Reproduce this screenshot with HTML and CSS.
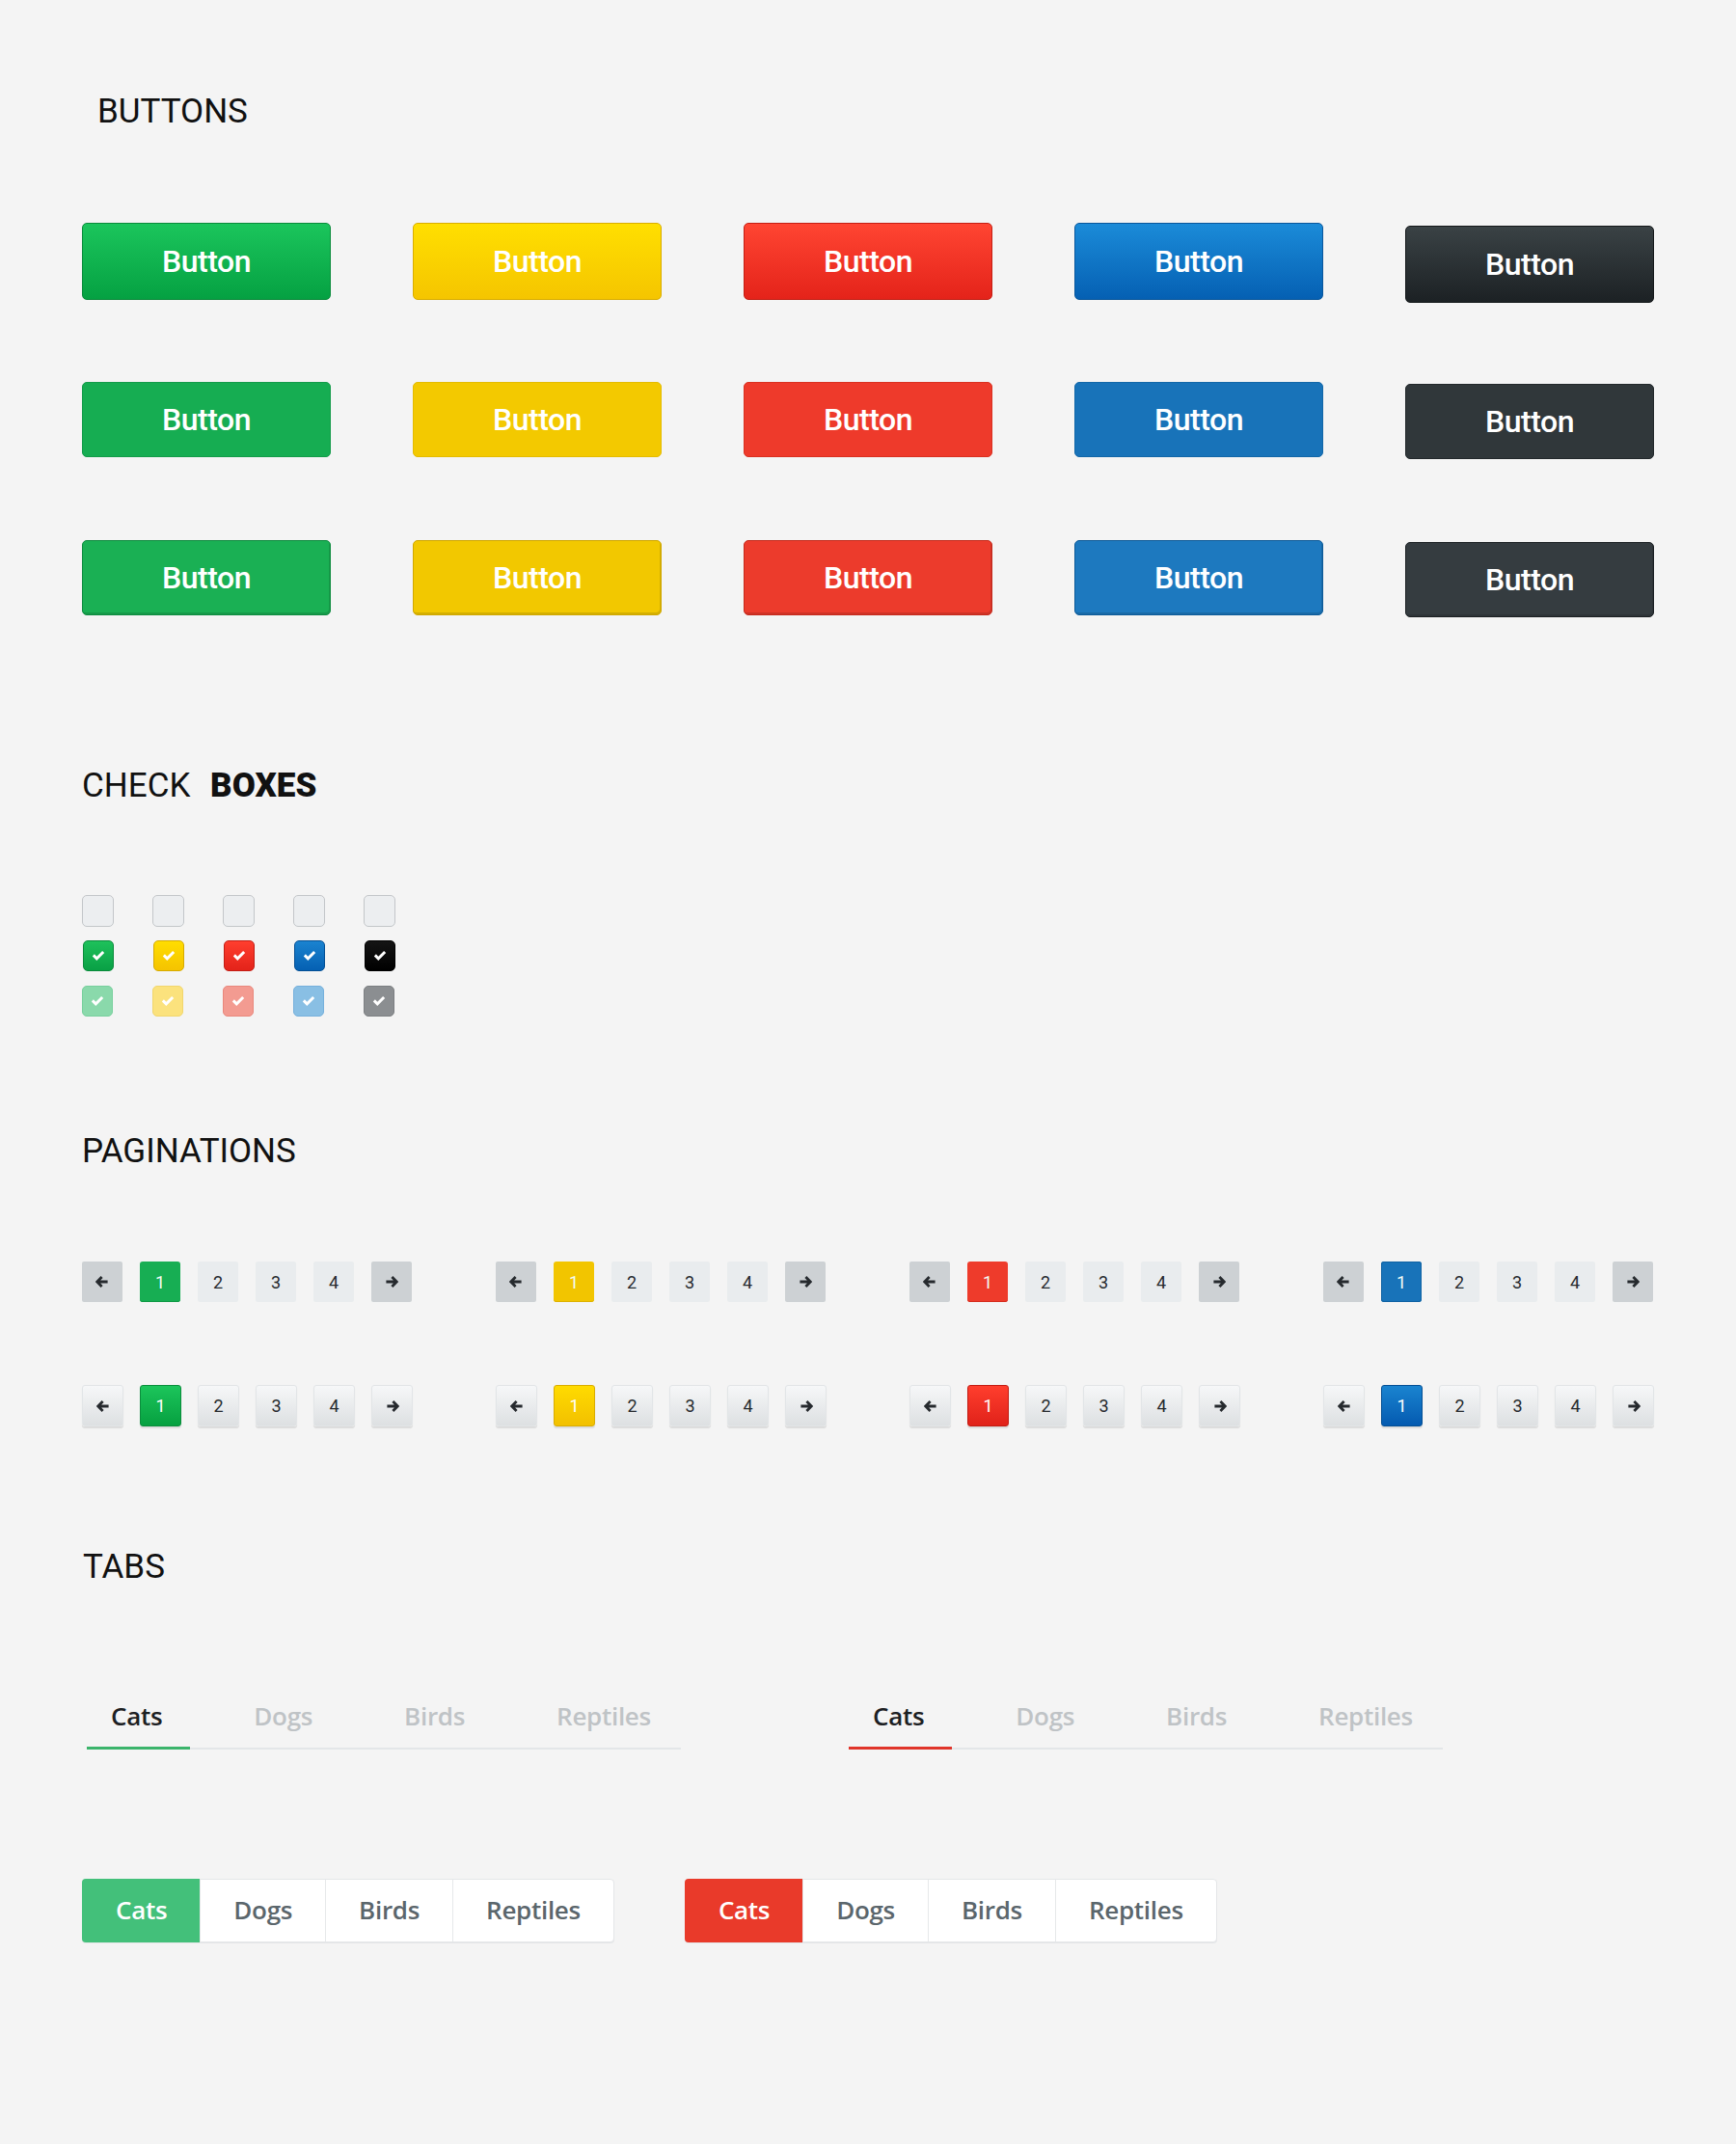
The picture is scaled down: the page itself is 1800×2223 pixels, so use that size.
FILE: index.html
```html
<!DOCTYPE html>
<html>
<head>
<meta charset="utf-8">
<title>UI Kit</title>
<link rel="stylesheet" href="styles.css">
</head>
<body>
<div class="page">
  <h2 class="heading h-buttons">BUTTONS</h2>
  <div class="btn-grid">
    <a class="btn v1 green">Button</a>
    <a class="btn v1 yellow">Button</a>
    <a class="btn v1 red">Button</a>
    <a class="btn v1 blue">Button</a>
    <a class="btn v1 dark">Button</a>
    <a class="btn v2 green">Button</a>
    <a class="btn v2 yellow">Button</a>
    <a class="btn v2 red">Button</a>
    <a class="btn v2 blue">Button</a>
    <a class="btn v2 dark">Button</a>
    <a class="btn v3 green">Button</a>
    <a class="btn v3 yellow">Button</a>
    <a class="btn v3 red">Button</a>
    <a class="btn v3 blue">Button</a>
    <a class="btn v3 dark">Button</a>
  </div>

  <h2 class="heading h-check">CHECK <span class="bold">BOXES</span></h2>
  <div class="cb-grid">
    <span class="cb empty"></span>
    <span class="cb empty"></span>
    <span class="cb empty"></span>
    <span class="cb empty"></span>
    <span class="cb empty"></span>
    <span class="cb on green"><svg viewBox="0 0 14 12" width="14" height="12"><path d="M0.8 6.4 L2.9 4.3 L5.3 6.7 L11.1 0.9 L13.2 3 L5.3 10.9 Z"/></svg></span>
    <span class="cb on yellow"><svg viewBox="0 0 14 12" width="14" height="12"><path d="M0.8 6.4 L2.9 4.3 L5.3 6.7 L11.1 0.9 L13.2 3 L5.3 10.9 Z"/></svg></span>
    <span class="cb on red"><svg viewBox="0 0 14 12" width="14" height="12"><path d="M0.8 6.4 L2.9 4.3 L5.3 6.7 L11.1 0.9 L13.2 3 L5.3 10.9 Z"/></svg></span>
    <span class="cb on blue"><svg viewBox="0 0 14 12" width="14" height="12"><path d="M0.8 6.4 L2.9 4.3 L5.3 6.7 L11.1 0.9 L13.2 3 L5.3 10.9 Z"/></svg></span>
    <span class="cb on black"><svg viewBox="0 0 14 12" width="14" height="12"><path d="M0.8 6.4 L2.9 4.3 L5.3 6.7 L11.1 0.9 L13.2 3 L5.3 10.9 Z"/></svg></span>
    <span class="cb light green"><svg viewBox="0 0 14 12" width="14" height="12"><path d="M0.8 6.4 L2.9 4.3 L5.3 6.7 L11.1 0.9 L13.2 3 L5.3 10.9 Z"/></svg></span>
    <span class="cb light yellow"><svg viewBox="0 0 14 12" width="14" height="12"><path d="M0.8 6.4 L2.9 4.3 L5.3 6.7 L11.1 0.9 L13.2 3 L5.3 10.9 Z"/></svg></span>
    <span class="cb light red"><svg viewBox="0 0 14 12" width="14" height="12"><path d="M0.8 6.4 L2.9 4.3 L5.3 6.7 L11.1 0.9 L13.2 3 L5.3 10.9 Z"/></svg></span>
    <span class="cb light blue"><svg viewBox="0 0 14 12" width="14" height="12"><path d="M0.8 6.4 L2.9 4.3 L5.3 6.7 L11.1 0.9 L13.2 3 L5.3 10.9 Z"/></svg></span>
    <span class="cb light gray"><svg viewBox="0 0 14 12" width="14" height="12"><path d="M0.8 6.4 L2.9 4.3 L5.3 6.7 L11.1 0.9 L13.2 3 L5.3 10.9 Z"/></svg></span>
  </div>

  <h2 class="heading h-pag">PAGINATIONS</h2>
  <div class="pag-row r1">
    <div class="pg"><span class="pb arr"><svg viewBox="0 0 14 12" width="14" height="12"><path d="M6.6 1 L1.7 6 L6.6 11 M2.2 6 H12.6"/></svg></span><span class="pb on green">1</span><span class="pb">2</span><span class="pb">3</span><span class="pb">4</span><span class="pb arr"><svg viewBox="0 0 14 12" width="14" height="12"><path d="M7.4 1 L12.3 6 L7.4 11 M11.8 6 H1.4"/></svg></span></div>
    <div class="pg"><span class="pb arr"><svg viewBox="0 0 14 12" width="14" height="12"><path d="M6.6 1 L1.7 6 L6.6 11 M2.2 6 H12.6"/></svg></span><span class="pb on yellow">1</span><span class="pb">2</span><span class="pb">3</span><span class="pb">4</span><span class="pb arr"><svg viewBox="0 0 14 12" width="14" height="12"><path d="M7.4 1 L12.3 6 L7.4 11 M11.8 6 H1.4"/></svg></span></div>
    <div class="pg"><span class="pb arr"><svg viewBox="0 0 14 12" width="14" height="12"><path d="M6.6 1 L1.7 6 L6.6 11 M2.2 6 H12.6"/></svg></span><span class="pb on red">1</span><span class="pb">2</span><span class="pb">3</span><span class="pb">4</span><span class="pb arr"><svg viewBox="0 0 14 12" width="14" height="12"><path d="M7.4 1 L12.3 6 L7.4 11 M11.8 6 H1.4"/></svg></span></div>
    <div class="pg"><span class="pb arr"><svg viewBox="0 0 14 12" width="14" height="12"><path d="M6.6 1 L1.7 6 L6.6 11 M2.2 6 H12.6"/></svg></span><span class="pb on blue">1</span><span class="pb">2</span><span class="pb">3</span><span class="pb">4</span><span class="pb arr"><svg viewBox="0 0 14 12" width="14" height="12"><path d="M7.4 1 L12.3 6 L7.4 11 M11.8 6 H1.4"/></svg></span></div>
  </div>
  <div class="pag-row r2">
    <div class="pg"><span class="pb arr"><svg viewBox="0 0 14 12" width="14" height="12"><path d="M6.6 1 L1.7 6 L6.6 11 M2.2 6 H12.6"/></svg></span><span class="pb on green">1</span><span class="pb">2</span><span class="pb">3</span><span class="pb">4</span><span class="pb arr"><svg viewBox="0 0 14 12" width="14" height="12"><path d="M7.4 1 L12.3 6 L7.4 11 M11.8 6 H1.4"/></svg></span></div>
    <div class="pg"><span class="pb arr"><svg viewBox="0 0 14 12" width="14" height="12"><path d="M6.6 1 L1.7 6 L6.6 11 M2.2 6 H12.6"/></svg></span><span class="pb on yellow">1</span><span class="pb">2</span><span class="pb">3</span><span class="pb">4</span><span class="pb arr"><svg viewBox="0 0 14 12" width="14" height="12"><path d="M7.4 1 L12.3 6 L7.4 11 M11.8 6 H1.4"/></svg></span></div>
    <div class="pg"><span class="pb arr"><svg viewBox="0 0 14 12" width="14" height="12"><path d="M6.6 1 L1.7 6 L6.6 11 M2.2 6 H12.6"/></svg></span><span class="pb on red">1</span><span class="pb">2</span><span class="pb">3</span><span class="pb">4</span><span class="pb arr"><svg viewBox="0 0 14 12" width="14" height="12"><path d="M7.4 1 L12.3 6 L7.4 11 M11.8 6 H1.4"/></svg></span></div>
    <div class="pg"><span class="pb arr"><svg viewBox="0 0 14 12" width="14" height="12"><path d="M6.6 1 L1.7 6 L6.6 11 M2.2 6 H12.6"/></svg></span><span class="pb on blue">1</span><span class="pb">2</span><span class="pb">3</span><span class="pb">4</span><span class="pb arr"><svg viewBox="0 0 14 12" width="14" height="12"><path d="M7.4 1 L12.3 6 L7.4 11 M11.8 6 H1.4"/></svg></span></div>
  </div>

  <h2 class="heading h-tabs">TABS</h2>
  <div class="utabs-wrap">
    <div class="utabs green">
      <span class="utab active">Cats</span><span class="utab">Dogs</span><span class="utab">Birds</span><span class="utab">Reptiles</span>
    </div>
    <div class="utabs red">
      <span class="utab active">Cats</span><span class="utab">Dogs</span><span class="utab">Birds</span><span class="utab">Reptiles</span>
    </div>
  </div>
  <div class="stabs-wrap">
    <div class="stabs green">
      <span class="stab active">Cats</span><span class="stab">Dogs</span><span class="stab">Birds</span><span class="stab">Reptiles</span>
    </div>
    <div class="stabs red">
      <span class="stab active">Cats</span><span class="stab">Dogs</span><span class="stab">Birds</span><span class="stab">Reptiles</span>
    </div>
  </div>
</div>
</body>
</html>
```

FILE: styles.css
```css
html, body {
  margin: 0;
  padding: 0;
}

body {
  background: #f4f4f4;
  font-family: Roboto, "Liberation Sans", sans-serif;
}

.page {
  padding: 99px 0 0 85px;
  height: 2223px;
  box-sizing: border-box;
}

.heading {
  margin: 0;
  font-family: Roboto, "Liberation Sans", sans-serif;
  font-weight: 400;
  font-size: 35px;
  line-height: 34px;
  color: #111;
}

.heading .bold {
  font-weight: 900;
  margin-left: 12px;
}

.h-buttons { margin-left: 16px; }
.h-check { margin-top: 159px; }
.h-pag { margin-top: 122px; }
.h-tabs { margin-top: 129px; margin-left: 1px; }

/* ---------- Buttons ---------- */
.btn-grid {
  display: grid;
  grid-template-columns: repeat(5, 258px);
  grid-template-rows: repeat(3, 80px);
  column-gap: 85px;
  row-gap: 84px;
  margin-top: 98px;
}

.btn {
  display: flex;
  align-items: center;
  justify-content: center;
  box-sizing: border-box;
  height: 80px;
  border-radius: 5px;
  border: 1px solid transparent;
  color: #fff;
  font-family: Roboto, "Liberation Sans", sans-serif;
  font-weight: 500;
  font-size: 32px;
  letter-spacing: -0.5px;
  cursor: pointer;
}

.btn.v2, .btn.v3 {
  height: 78px;
  margin-top: 1px;
}

.btn.dark { margin-top: 3px; }

.btn.v1.green { background: linear-gradient(#1bc55c, #05a142); border-color: #0a8b3b; }
.btn.v1.yellow { background: linear-gradient(#ffdf00, #f5c500); border-color: #d9ad00; }
.btn.v1.red { background: linear-gradient(#ff4532, #e4231a); border-color: #c41e13; }
.btn.v1.blue { background: linear-gradient(#1b8bd8, #0560b3); border-color: #0a579c; }
.btn.v1.dark { background: linear-gradient(#3a4245, #1c2124); border-color: #14181a; }

.btn.v2.green { background: #16ad52; border-color: #139b49; }
.btn.v2.yellow { background: #f3c900; border-color: #e4bb00; }
.btn.v2.red { background: #ee3a2b; border-color: #d93020; }
.btn.v2.blue { background: #1873b9; border-color: #1267a8; }
.btn.v2.dark { background: #30373a; border-color: #22282b; }

.btn.v3 { box-shadow: inset -1px -2px 0 rgba(0, 0, 0, 0.12); }
.btn.v3.green { background: #1ab054; border-color: #0e8b3f; }
.btn.v3.yellow { background: #f2c800; border-color: #d0a700; }
.btn.v3.red { background: #ec3b2c; border-color: #c52a1c; }
.btn.v3.blue { background: #1d79bf; border-color: #0d5a98; }
.btn.v3.dark { background: #353c40; border-color: #1b2023; }

/* ---------- Checkboxes ---------- */
.cb-grid {
  display: grid;
  grid-template-columns: repeat(5, 33px);
  grid-auto-rows: 33px;
  gap: 14px 40px;
  margin-top: 96px;
}

.cb {
  display: flex;
  align-items: center;
  justify-content: center;
  box-sizing: border-box;
  width: 33px;
  height: 33px;
  border-radius: 5px;
  border: 1px solid transparent;
}

.cb svg { fill: #fff; }

.cb.empty {
  background: #eceef0;
  border: 1.5px solid #c3c6c9;
}

.cb.on { width: 32px; height: 32px; margin-left: 1px; }
.cb.on.green { background: linear-gradient(#1ec15b, #09a045); border-color: #0a8a3b; }
.cb.on.yellow { background: linear-gradient(#ffdd00, #f5c300); border-color: #d6aa00; }
.cb.on.red { background: linear-gradient(#ff3e2e, #e3231a); border-color: #c21d14; }
.cb.on.blue { background: linear-gradient(#1a83d0, #0560b2); border-color: #044f94; }
.cb.on.black { background: linear-gradient(#141414, #000); border-color: #000; }

.cb.light { width: 32px; height: 32px; }
.cb.light.green { background: #8ad9ab; border-color: #78d09d; }
.cb.light.yellow { background: #fbe27d; border-color: #f1d66c; }
.cb.light.red { background: #f39b91; border-color: #e9877c; }
.cb.light.blue { background: #89bfe4; border-color: #75b0dc; }
.cb.light.gray { background: #8b8e91; border-color: #7c7f82; }

/* ---------- Pagination ---------- */
.pag-row {
  display: flex;
  gap: 87px;
}

.pag-row.r1 { margin-top: 97px; }
.pag-row.r2 { margin-top: 86px; gap: 86px; }

.pg {
  display: flex;
  gap: 18px;
}

.r2 .pg { gap: 17px; }

.pb {
  display: flex;
  align-items: center;
  justify-content: center;
  box-sizing: border-box;
  width: 42px;
  height: 42px;
  border-radius: 2px;
  font-family: Roboto, "Liberation Sans", sans-serif;
  font-size: 18px;
  color: #262a2e;
  background: #e9ecee;
}

.pb svg {
  fill: none;
  stroke: #262a2e;
  stroke-width: 2.8;
}

.r1 .pb.arr { background: #cdd1d4; }
.r1 .pb.on { color: #f2fbf5; border-radius: 3px; }
.r1 .pb.on.green { background: #17ae53; box-shadow: inset 0 -1px 0 #0f9a45; }
.r1 .pb.on.yellow { background: #f2c500; box-shadow: inset 0 -1px 0 #ddb200; }
.r1 .pb.on.red { background: #ee3b2b; box-shadow: inset 0 -1px 0 #d52d1e; }
.r1 .pb.on.blue { background: #1873b9; box-shadow: inset 0 0 0 1px #0f62a3; }

.r2 .pb {
  width: 43px;
  height: 43px;
  border-radius: 3px;
  background: linear-gradient(#f6f7f8, #dde0e2);
  border: 1px solid #e2e5e7;
  box-shadow: 0 2px 1px rgba(0, 0, 0, 0.10);
}

.r2 .pb.on { color: #fff; }
.r2 .pb.on.green { background: linear-gradient(#1cc55b, #06a040); border-color: #0b8d3c; }
.r2 .pb.on.yellow { background: linear-gradient(#ffdb00, #f2c000); border-color: #d9ac00; }
.r2 .pb.on.red { background: linear-gradient(#ff3e2d, #e0221a); border-color: #c21c13; }
.r2 .pb.on.blue { background: linear-gradient(#1a84d0, #045ab0); border-color: #044f94; }

/* ---------- Underline tabs ---------- */
.utabs-wrap {
  display: flex;
  gap: 174px;
  margin-top: 119px;
  margin-left: 5px;
}

.utabs {
  display: flex;
  gap: 41px;
  width: 616px;
  border-bottom: 2px solid #e3e6e8;
}

.utab {
  font-family: "Open Sans", "Liberation Sans", sans-serif;
  font-weight: 600;
  font-size: 26px;
  line-height: 36px;
  letter-spacing: -0.3px;
  padding: 0 29px 14px 25px;
  margin-bottom: -2px;
  border-bottom: 3px solid transparent;
  color: #bfc3c6;
}

.utab.active { color: #1c2023; }
.utabs.green .utab.active { border-bottom-color: #3bb46b; }
.utabs.red .utab.active { border-bottom-color: #e0352a; }

/* ---------- Segmented tabs ---------- */
.stabs-wrap {
  display: flex;
  gap: 73px;
  margin-top: 134px;
}

.stabs {
  display: flex;
  background: #fff;
  border: 1px solid #e4e6e8;
  border-radius: 4px;
  box-shadow: 0 1px 0 #e4e6e8;
}

.stab {
  font-family: "Open Sans", "Liberation Sans", sans-serif;
  font-weight: 600;
  font-size: 26px;
  line-height: 36px;
  letter-spacing: -0.3px;
  padding: 13px 34px 15px;
  color: #5b666c;
  border-left: 1px solid #e6e8ea;
}

.stab:first-child { border-left: none; }

.stab.active {
  color: #fff;
  margin: -1px 0 -1px -1px;
  padding: 14px 34px 16px 35px;
  border-radius: 4px 0 0 4px;
}

.stabs.green .stab.active { background: #43c07a; }
.stabs.red .stab.active { background: #e93a2a; }
```
